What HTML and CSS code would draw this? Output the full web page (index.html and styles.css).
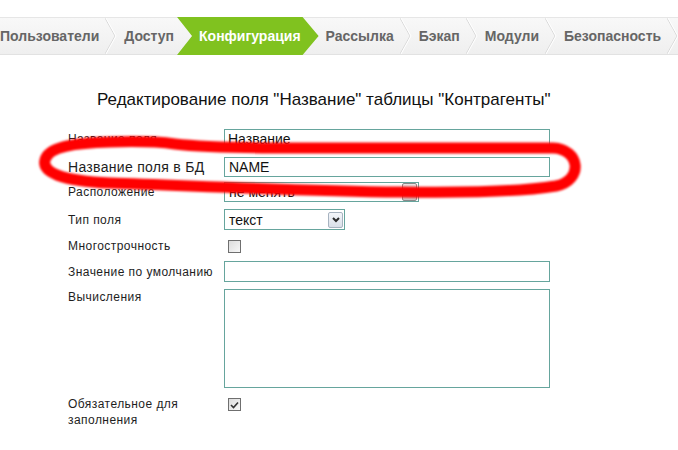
FILE: index.html
```html
<!DOCTYPE html>
<html lang="ru">
<head>
<meta charset="utf-8">
<link rel="stylesheet" href="styles.css">
</head>
<body>
<div class="page">
  <nav class="steps">
    <span class="step">Пользователи</span>
    <svg class="sep" width="12" height="36" viewBox="0 0 12 36"><polyline points="0,0 10,18 0,36" fill="none" stroke="#d9d9d9" stroke-width="1"/><polyline points="1,0 11,18 1,36" fill="none" stroke="#ffffff" stroke-width="1"/></svg>
    <span class="step">Доступ</span>
    <span class="step active">Конфигурация</span>
    <span class="step">Рассылка</span>
    <svg class="sep" width="12" height="36" viewBox="0 0 12 36"><polyline points="0,0 10,18 0,36" fill="none" stroke="#d9d9d9" stroke-width="1"/><polyline points="1,0 11,18 1,36" fill="none" stroke="#ffffff" stroke-width="1"/></svg>
    <span class="step">Бэкап</span>
    <svg class="sep" width="12" height="36" viewBox="0 0 12 36"><polyline points="0,0 10,18 0,36" fill="none" stroke="#d9d9d9" stroke-width="1"/><polyline points="1,0 11,18 1,36" fill="none" stroke="#ffffff" stroke-width="1"/></svg>
    <span class="step">Модули</span>
    <svg class="sep" width="12" height="36" viewBox="0 0 12 36"><polyline points="0,0 10,18 0,36" fill="none" stroke="#d9d9d9" stroke-width="1"/><polyline points="1,0 11,18 1,36" fill="none" stroke="#ffffff" stroke-width="1"/></svg>
    <span class="step">Безопасность</span>
    <svg class="sep" width="12" height="36" viewBox="0 0 12 36"><polyline points="0,0 10,18 0,36" fill="none" stroke="#d9d9d9" stroke-width="1"/><polyline points="1,0 11,18 1,36" fill="none" stroke="#ffffff" stroke-width="1"/></svg>
  </nav>

  <h1 class="title">Редактирование поля "Название" таблицы "Контрагенты"</h1>

  <form class="form">
    <div class="row r1">
      <label class="lbl">Название поля</label>
      <div class="input">Название</div>
    </div>
    <div class="row r2">
      <label class="lbl big">Название поля в БД</label>
      <div class="input name">NAME</div>
    </div>
    <div class="row r3">
      <label class="lbl">Расположение</label>
      <div class="select s1"><span class="sel-text">не менять</span><span class="sel-btn grey"></span></div>
    </div>
    <div class="row r4">
      <label class="lbl">Тип поля</label>
      <div class="select s2"><span class="sel-text">текст</span><span class="sel-btn"><svg width="10" height="8" viewBox="0 0 10 8"><polyline points="2,2 5,5 8,2" fill="none" stroke="#2b2b2b" stroke-width="2"/></svg></span></div>
    </div>
    <div class="row r5">
      <label class="lbl">Многострочность</label>
      <span class="check"></span>
    </div>
    <div class="row r6">
      <label class="lbl">Значение по умолчанию</label>
      <div class="input tall"></div>
    </div>
    <div class="row r7">
      <label class="lbl">Вычисления</label>
      <div class="textarea"></div>
    </div>
    <div class="row r8">
      <label class="lbl two">Обязательное для<br>заполнения</label>
      <span class="check checked"><svg width="9" height="8" viewBox="0 0 9 8"><polyline points="1,4 3.5,6.5 8,1.5" fill="none" stroke="#333" stroke-width="1.6"/></svg></span>
    </div>
  </form>

  <svg class="scribble" width="678" height="450" viewBox="0 0 678 450">
    <defs><filter id="soft" x="-10%" y="-50%" width="120%" height="200%"><feGaussianBlur stdDeviation="1.1"/></filter></defs>
    <path d="M 175 144 C 200 147, 230 148, 300 148 L 553 148 C 580 149, 584 180, 556 186 C 520 192, 470 193, 400 192 C 300 191, 200 186, 110 183 C 60 181, 42 172, 45 160 C 48 148, 70 143, 110 142 C 140 141, 160 142, 175 144 Z" fill="none" stroke="#ff0000" stroke-width="11" stroke-linejoin="round" filter="url(#soft)"/>
  </svg>
</div>
</body>
</html>
```

FILE: styles.css
```css
html, body {
  margin: 0;
  padding: 0;
  background: #ffffff;
}

body {
  font-family: "Liberation Sans", Arial, sans-serif;
  color: #1a1a1a;
}

.page {
  position: relative;
  width: 678px;
  height: 450px;
  overflow: hidden;
  padding-top: 17px;
  box-sizing: border-box;
}

.steps {
  display: flex;
  align-items: center;
  height: 36px;
  border-top: 1px solid #e6e6e6;
  border-bottom: 1px solid #e2e2e2;
  background: linear-gradient(#f8f8f8, #efefef);
  white-space: nowrap;
}

.step {
  font-weight: bold;
  font-size: 14px;
  color: #666666;
  line-height: 36px;
}

.sep {
  flex: none;
  margin: 0 7px 0 6px;
}

.step.active {
  background: #80c21f;
  color: #ffffff;
  margin-left: 3px;
  margin-right: 7px;
  padding: 0 18px 0 22px;
  height: 38px;
  line-height: 38px;
  margin-top: -1px;
  margin-bottom: -1px;
  clip-path: polygon(0 0, calc(100% - 16px) 0, 100% 50%, calc(100% - 16px) 100%, 0 100%, 15px 50%);
}

.title {
  margin: 35px 0 19px 97px;
  font-size: 17px;
  font-weight: normal;
  line-height: 20px;
  color: #111111;
}

.form {
  margin: 0 0 0 68px;
}

.row {
  display: flex;
  align-items: center;
}

.lbl {
  width: 156px;
  flex: none;
  font-size: 12px;
  line-height: 16px;
  letter-spacing: 0.45px;
  color: #1e1e1e;
}

.lbl.big {
  font-size: 14px;
  letter-spacing: 0.3px;
}

.r2 { margin-top: 8px; }
.r3 { margin-top: 5px; }
.r4 { margin-top: 7px; }
.r5 { margin-top: 6px; height: 20px; }
.r6 { margin-top: 5px; }
.r7 { margin-top: 7px; align-items: flex-start; }
.r8 { margin-top: 8px; align-items: flex-start; }

.input {
  width: 326px;
  height: 20px;
  box-sizing: border-box;
  border: 1px solid #66a59d;
  font-size: 14px;
  line-height: 18px;
  padding-left: 3px;
  color: #111;
}

.input.name { padding-left: 4px; }
.input.tall { height: 21px; }

.select {
  display: flex;
  align-items: center;
  justify-content: space-between;
  box-sizing: border-box;
  border: 1px solid #66a59d;
  font-size: 14px;
  color: #111;
  padding: 0 1px 0 4px;
}

.s1 { width: 195px; height: 20px; }
.s2 { width: 121px; height: 21px; }

.sel-btn {
  display: flex;
  align-items: center;
  justify-content: center;
  width: 15px;
  height: 16px;
  box-sizing: border-box;
  border: 1px solid #a7b3c0;
  border-radius: 2px;
  background: linear-gradient(#f4f6fa, #d9dfe8);
}

.sel-btn.grey {
  border-color: #8a8a8a;
  background: linear-gradient(#e8e8e8, #c9c9c9);
  height: 18px;
}

.check {
  display: flex;
  align-items: center;
  justify-content: center;
  width: 13px;
  height: 13px;
  box-sizing: border-box;
  border: 1px solid #6f6f6f;
  background: linear-gradient(135deg, #dcdcdc, #f7f7f7);
  margin-left: 4px;
}

.check.checked {
  margin-top: 2px;
}

.textarea {
  width: 326px;
  height: 99px;
  box-sizing: border-box;
  border: 1px solid #66a59d;
}

.scribble {
  position: absolute;
  top: 0;
  left: 0;
  pointer-events: none;
}
```
